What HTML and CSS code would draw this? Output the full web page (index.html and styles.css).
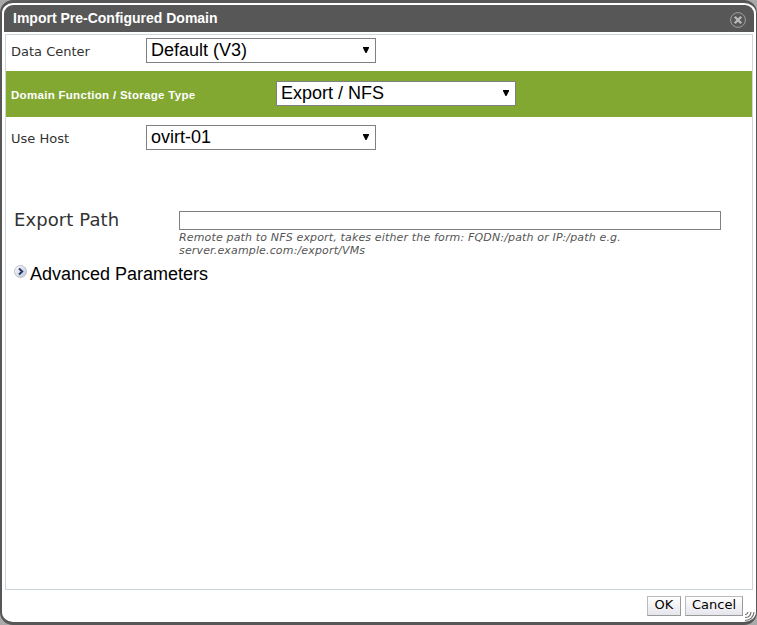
FILE: index.html
```
<!DOCTYPE html>
<html lang="en">
<head>
<meta charset="utf-8">
<title>Import Pre-Configured Domain</title>
<link rel="stylesheet" href="styles.css">
</head>
<body>
<div class="dialog">
  <header class="titlebar">
    <h1>Import Pre-Configured Domain</h1>
    <svg class="close" width="16" height="16" viewBox="0 0 16 16"><circle cx="8" cy="8" r="7.4" fill="none" stroke="#a0a0a0"/><path d="M4.8 4.8l6.4 6.4M11.2 4.8l-6.4 6.4" stroke="#bbb" stroke-width="2.3"/></svg>
  </header>
  <main class="content">
    <div class="row first"><span class="label">Data Center</span><div class="select"><span>Default (V3)</span><svg width="6" height="6" viewBox="0 0 6 6"><path d="M0 0h6v1L3.5 6h-1L0 1z"/></svg></div></div>
    <div class="row type"><span class="label">Domain Function / Storage Type</span><div class="select"><span>Export / NFS</span><svg width="6" height="6" viewBox="0 0 6 6"><path d="M0 0h6v1L3.5 6h-1L0 1z"/></svg></div></div>
    <div class="row host"><span class="label">Use Host</span><div class="select"><span>ovirt-01</span><svg width="6" height="6" viewBox="0 0 6 6"><path d="M0 0h6v1L3.5 6h-1L0 1z"/></svg></div></div>
    <div class="export">
      <span class="path-label">Export Path</span>
      <div class="path-field"><div class="input"></div><p>Remote path to NFS export, takes either the form: FQDN:/path or IP:/path e.g.<br>server.example.com:/export/VMs</p></div>
    </div>
    <div class="advanced">
      <svg width="14" height="14" viewBox="0 0 14 14"><defs><linearGradient id="g" x1="0" y1="0" x2="1" y2="1"><stop offset="0" stop-color="#fff"/><stop offset="1" stop-color="#bcc2d2"/></linearGradient></defs><circle cx="6.5" cy="6.5" r="6" fill="url(#g)" stroke="#bdc3d2"/><path d="M5 3.5L8.2 6.5 5 9.5" fill="none" stroke="#243a6b" stroke-width="2"/></svg>
      <span>Advanced Parameters</span>
    </div>
  </main>
  <footer class="footer"><div class="button ok">OK</div><div class="button cancel">Cancel</div></footer>
  <svg class="grip" width="12" height="12" viewBox="0 0 12 12" fill="none" stroke="#777" stroke-width="1.2"><path d="M2 4.5Q4.5 4.5 5 2M2 7.5Q7.5 7.5 8 2M2 10.5Q10 10 11 2"/></svg>
</div>
</body>
</html>
```
FILE: styles.css
```
* { box-sizing: border-box; }
body { margin: 0; background: #aaa; font-family: "Liberation Sans", Arial, sans-serif; }
.dialog {
  position: relative;
  display: flex;
  flex-direction: column;
  height: 625px;
  padding: 2px 2px 0;
  background: #fff;
  border: solid #575757;
  border-width: 3px 1px 3px 2px;
  border-radius: 13px;
}
.titlebar {
  display: flex;
  justify-content: space-between;
  height: 27px;
  padding: 7px 8px 0 9px;
  background: #575757;
  border-radius: 9px 9px 0 0;
}
h1 { margin: -2px 0 0; font-size: 14px; line-height: 16px; color: #fff; white-space: nowrap; }
.content { height: 556px; margin: 2px 1px 0; border: 1px solid #cad6dc; }
.row { display: flex; align-items: flex-start; padding-left: 5px; }
.label { width: 135px; font: 13px/16px "DejaVu Sans", sans-serif; color: #333; white-space: nowrap; }
.first { height: 36px; padding-top: 3px; }
.first .label, .host .label { margin-top: 6px; }
.type { height: 46px; padding-top: 10px; background: #82a832; }
.type .label { width: 265px; margin-top: 6px; font: bold 11.5px/16px "Liberation Sans", Arial, sans-serif; letter-spacing: 0.3px; color: #fff; }
.host { padding-top: 8px; }
.select {
  display: flex;
  justify-content: space-between;
  width: 230px;
  height: 25px;
  padding: 1px 6px 0 4px;
  border: 1px solid #808080;
  background: #fff;
  font-size: 18px;
  line-height: 20px;
}
.type .select { width: 240px; }
.select svg { margin-top: 7px; }
.export { display: flex; padding: 61px 0 0 8px; }
.path-label { width: 165px; font: 18px/18px "DejaVu Sans", sans-serif; letter-spacing: 0.1px; color: #333; }
.input { width: 542px; height: 19px; border: 1px solid #808080; }
.path-field p { margin: 1px 0 0; font: italic 11px/13px "DejaVu Sans", sans-serif; letter-spacing: 0.155px; color: #555; white-space: nowrap; }
.advanced { display: flex; gap: 2px; padding: 8px 0 0 8px; font-size: 18px; line-height: 19px; }
.footer { display: flex; justify-content: flex-end; gap: 4px; padding: 6px 11px 0 0; }
.button {
  height: 20px;
  border: 1px solid #bbb;
  border-right-color: #999;
  border-bottom-color: #999;
  background: linear-gradient(#fff, #e5e5ec);
  font: 13px/16px "DejaVu Sans", sans-serif;
  text-align: center;
}
.ok { width: 34px; }
.cancel { width: 58px; }
.grip { position: absolute; right: 1px; bottom: 0; }
```
